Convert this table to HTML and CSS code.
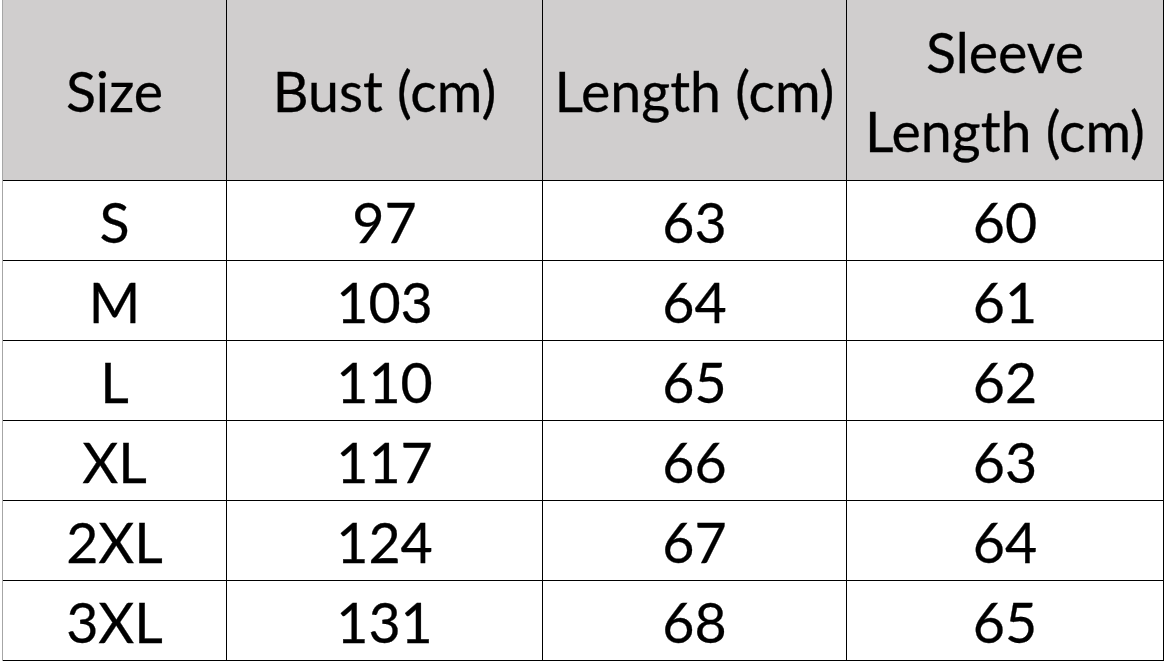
FILE: index.html
```html
<!DOCTYPE html>
<html>
<head>
<meta charset="utf-8">
<link rel="stylesheet" href="styles.css">
</head>
<body>
<div class="sheet">
  <div class="grid">
    <div class="cell head">Size</div>
    <div class="cell head">Bust (cm)</div>
    <div class="cell head">Length (cm)</div>
    <div class="cell head two">Sleeve<br>Length (cm)</div>

    <div class="cell">S</div><div class="cell">97</div><div class="cell">63</div><div class="cell">60</div>
    <div class="cell">M</div><div class="cell">103</div><div class="cell">64</div><div class="cell">61</div>
    <div class="cell">L</div><div class="cell">110</div><div class="cell">65</div><div class="cell">62</div>
    <div class="cell">XL</div><div class="cell">117</div><div class="cell">66</div><div class="cell">63</div>
    <div class="cell">2XL</div><div class="cell">124</div><div class="cell">67</div><div class="cell">64</div>
    <div class="cell">3XL</div><div class="cell">131</div><div class="cell">68</div><div class="cell">65</div>
  </div>
</div>
</body>
</html>
```

FILE: styles.css
```css
html, body {
  margin: 0;
  padding: 0;
  background: #ffffff;
}
.sheet {
  width: 1165px;
  height: 664px;
  overflow: hidden;
  padding-left: 2px;
  box-sizing: border-box;
}
.grid {
  display: grid;
  grid-template-columns: 224px 316px 304px 317px;
  grid-template-rows: 181px repeat(6, 80px);
  border-left: 1px solid #a6a6a6;
  font-family: "Lato", "Noto Sans", sans-serif;
  font-size: 55.5px;
  color: #000;
}
.cell {
  border-right: 1px solid #000;
  border-bottom: 1px solid #000;
  display: flex;
  align-items: center;
  justify-content: center;
  text-align: center;
  padding-top: 3px;
  box-sizing: border-box;
  line-height: 1;
  -webkit-text-stroke: 0.3px #000;
}
.head {
  background: #d0cece;
  padding-top: 2px;
}
.two {
  line-height: 79px;
}
```
